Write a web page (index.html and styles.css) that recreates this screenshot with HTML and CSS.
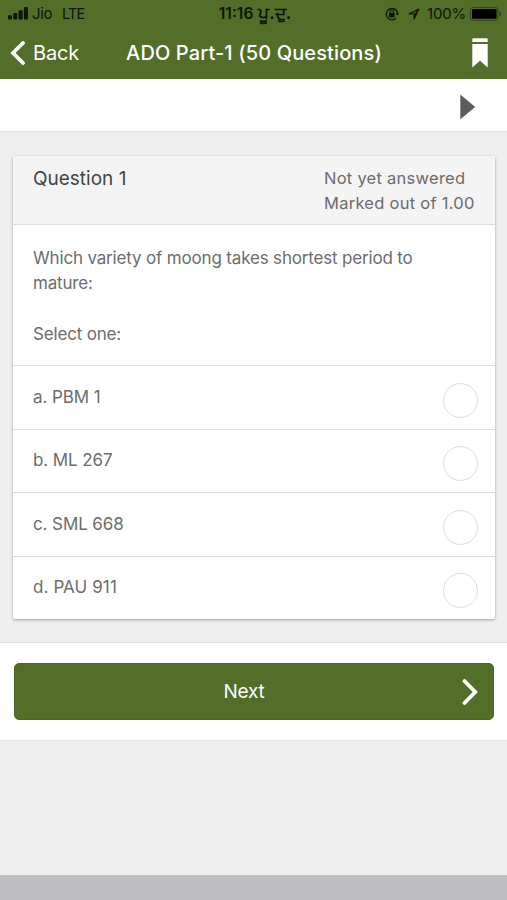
FILE: index.html
```html
<!DOCTYPE html>
<html lang="en">
<head>
<meta charset="utf-8">
<meta name="viewport" content="width=device-width, initial-scale=1">
<title>ADO Part-1 (50 Questions)</title>
<link rel="stylesheet" href="styles.css">
</head>
<body>
<header class="header">
  <div class="status">
    <div class="status-left">
      <svg class="signal" width="20" height="13" viewBox="0 0 20 13"><rect x="0" y="8.3" width="4" height="4.2" rx="1"/><rect x="5.3" y="6" width="4" height="6.5" rx="1"/><rect x="10.6" y="3.3" width="4" height="9.2" rx="1"/><rect x="15.9" y="0" width="4" height="12.5" rx="1"/></svg>
      <span class="carrier">Jio</span><span class="network">LTE</span>
    </div>
    <div class="clock"><span>11:16</span><span class="meridiem" lang="pa">ਪੂ.ਦੁ.</span></div>
    <div class="status-right">
      <svg class="lock" width="14" height="14" viewBox="0 0 14 14"><path d="M10.8 11.3A5.6 5.6 0 1 1 12.5 8M3.2 2.8A5.6 5.6 0 0 1 12.5 6" fill="none" stroke="#0c1506" stroke-width="1.2"/><path d="M10.8 6h3.2l-1.6 2.6z"/><rect x="4" y="6" width="5.6" height="4.2" rx=".5"/><path d="M5.1 6.2V5a1.7 1.7 0 0 1 3.4 0v1.2" fill="none" stroke="#0c1506" stroke-width="1.1"/></svg>
      <svg class="locate" width="12" height="12" viewBox="0 0 12 12"><path d="M1 6L10.8 1.1 6.1 10.9V6z" fill="none" stroke="#0c1506" stroke-width="1.1" stroke-linejoin="round"/><path d="M6 6L10.8 1.1 6.1 10.9z"/></svg>
      <span class="percent">100%</span>
      <svg class="battery" width="32" height="14" viewBox="0 0 32 14"><rect x=".5" y=".5" width="27.5" height="12.8" rx="2.4" fill="none" stroke="#34441a"/><rect x="2" y="2" width="24.6" height="9.8" rx="1" fill="#000"/><path d="M29.2 4.6q2 .8 2 2.4t-2 2.4z" fill="#34441a"/></svg>
    </div>
  </div>
  <div class="navbar">
    <div class="back">
      <svg width="15" height="24" viewBox="0 0 15 24"><path d="M13 2L3 12l10 10" fill="none" stroke="#fff" stroke-width="3.8" stroke-linecap="round"/></svg>
      <span>Back</span>
    </div>
    <h1 class="title">ADO Part-1 (50 Questions)</h1>
    <svg class="bookmark" width="16" height="30" viewBox="0 0 16 30"><path d="M.3 1.2Q.3.2 1.3.2h13.4q1 0 1 1v2.7H.3zM.3 6h15.4v23.6L8 22.8.3 29.6z" fill="#fff"/></svg>
  </div>
</header>

<nav class="pager">
  <svg width="16" height="26" viewBox="0 0 16 26"><path d="M.3 .5L15.2 13 .3 25.3z" fill="#5c5c5c"/></svg>
</nav>

<main class="content">
  <section class="card">
    <div class="card-head">
      <h2>Question 1</h2>
      <div class="state"><p class="answered">Not yet answered</p><p class="marks">Marked out of 1.00</p></div>
    </div>
    <div class="question">
      <p class="ask">Which variety of moong takes shortest period to<br>mature:</p>
      <p class="select">Select one:</p>
    </div>
    <div class="option"><span class="a">a. PBM 1</span><i class="radio"></i></div>
    <div class="option"><span class="b">b. ML 267</span><i class="radio"></i></div>
    <div class="option"><span class="c">c. SML 668</span><i class="radio"></i></div>
    <div class="option"><span class="d">d. PAU 911</span><i class="radio"></i></div>
  </section>
</main>

<footer class="actions">
  <div class="next">
    <span>Next</span>
    <svg width="16" height="26" viewBox="0 0 16 26"><path d="M2.5 2L13.2 13 2.5 24" fill="none" stroke="#fff" stroke-width="3.8" stroke-linecap="round"/></svg>
  </div>
</footer>
<div class="toolbar"></div>
</body>
</html>
```
FILE: styles.css
```css
* { box-sizing: border-box; }
body {
  margin: 0;
  width: 507px;
  height: 900px;
  overflow: hidden;
  display: flex;
  flex-direction: column;
  background: #eee;
  color: #6c6c6c;
  font-family: Inter, "Noto Sans", "Liberation Sans", sans-serif;
  font-size: 17px;
}
h1, h2, p { margin: 0; font-weight: 400; }
svg { display: block; flex: none; }
span, h1, h2 { white-space: nowrap; }

.header { height: 79px; flex: none; background: #526e29; border-bottom: 1px solid #55702d; }
.status {
  height: 27px;
  display: grid;
  grid-template-columns: 1fr auto 1fr;
  align-items: center;
  padding: 0 5px 0 8px;
  color: #0c1506;
  fill: #0c1506;
  font-size: 15px;
}
.status-left, .status-right { display: flex; align-items: center; }
.status-right { justify-content: flex-end; }
.carrier { margin-left: 4px; letter-spacing: -.4px; }
.network { margin-left: 10px; font-size: 14.5px; letter-spacing: -.8px; }
.clock { display: flex; align-items: center; gap: 5px; font-weight: 600; font-size: 15.5px; }
.meridiem { margin-bottom: 2px; font-size: 17px; line-height: 20px; }
.locate { margin-left: 9px; }
.percent { margin: 0 4px 0 7px; letter-spacing: -.2px; }
.navbar {
  height: 51px;
  display: grid;
  grid-template-columns: 1fr auto 1fr;
  align-items: center;
  padding: 0 19px 0 10px;
  color: #fff;
  font-size: 20px;
}
.back { display: flex; align-items: center; gap: 8px; letter-spacing: -.2px; }
.title { margin: 0 -5px 0 5px; font-size: 20px; font-weight: 500; letter-spacing: .12px; }
.bookmark { justify-self: end; }

.pager {
  height: 53px;
  flex: none;
  display: flex;
  align-items: center;
  justify-content: flex-end;
  padding: 3px 31px 0 0;
  background: #fff;
  border-bottom: 1px solid #e6e6e6;
}
.content { height: 510px; flex: none; padding: 24px 12px 0 13px; }
.card {
  height: 463px;
  background: #fff;
  border-radius: 2px;
  box-shadow: 0 1px 3px rgba(0, 0, 0, .33);
  overflow: hidden;
}
.card-head {
  height: 69px;
  display: flex;
  justify-content: space-between;
  padding: 10px 20px 0;
  background: #f4f4f4;
  border-bottom: 1px solid #dedede;
}
h2 { color: #444; font-size: 19px; line-height: 26px; }
.state { width: 151px; font-weight: 500; font-size: 16.5px; line-height: 24.5px; letter-spacing: .26px; white-space: nowrap; }
.question { height: 140px; padding: 21px 20px 0; line-height: 25px; letter-spacing: -.17px; white-space: nowrap; }
.select { margin-top: 26px; }
.option {
  height: 63.5px;
  display: flex;
  justify-content: space-between;
  align-items: center;
  padding: 0 17px 0 20px;
  border-top: 1px solid #dedede;
  letter-spacing: -.1px;
}
.option span { margin-top: -1px; }
.option .d { letter-spacing: .1px; }
.radio { width: 35px; height: 35px; margin-top: 6px; border: 1.5px solid #ddd; border-radius: 50%; }

.actions {
  height: 99px;
  flex: none;
  padding: 20px 13px 0 14px;
  background: #fff;
  border-top: 1px solid #e3e3e3;
  border-bottom: 1px solid #e3e3e3;
}
.next {
  height: 57px;
  display: grid;
  grid-template-columns: 1fr auto 1fr;
  align-items: center;
  padding: 0 15px;
  background: #526e29;
  border: 1px solid #4b6626;
  border-radius: 5px;
  color: #fff;
  font-size: 19px;
}
.next span { grid-column: 2; margin: 0 10px 0 -10px; letter-spacing: -.2px; }
.next svg { justify-self: end; }
.toolbar { height: 25px; flex: none; margin-top: auto; background: #bdbcc1; border-top: 1px solid #c4c4c6; }
```
